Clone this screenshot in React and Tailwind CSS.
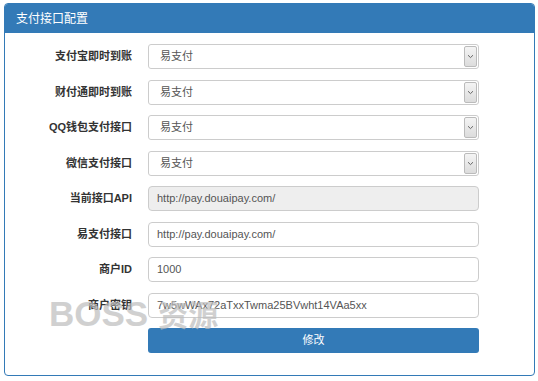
import React from "react";

const selects = ["支付宝即时到账", "财付通即时到账", "QQ钱包支付接口", "微信支付接口"];

const fields = [
  { label: "当前接口API", value: "http://pay.douaipay.com/", disabled: true },
  { label: "易支付接口", value: "http://pay.douaipay.com/" },
  { label: "商户ID", value: "1000" },
  { label: "商户密钥", value: "7w5wWAx72aTxxTwma25BVwht14VAa5xx" },
];

const Label = ({ children }) => (
  <div className="w-[127px] text-right text-[11px] font-bold text-[#333]">{children}</div>
);

export default function App() {
  return (
    <div
      className="w-[538px] h-[381px] bg-white pt-[3px] pl-[4px]"
      style={{ fontFamily: '"Liberation Sans", Arial, "Noto Sans CJK SC", sans-serif' }}
    >
      <div className="relative w-[531px] h-[373px] border border-[#337ab7] rounded-[4px] overflow-hidden">
        <div className="h-[29px] bg-[#337ab7] flex items-center pl-[11px] text-[12px] text-white">
          支付接口配置
        </div>
        <div className="flex flex-col gap-[10.5px] pt-[11px]">
          {selects.map((s) => (
            <div key={s} className="flex items-center">
              <Label>{s}</Label>
              <div className="ml-[16px] w-[331px] h-[25px] flex border border-[#ccc] rounded-[3px] bg-white">
                <div className="flex-1 flex items-center pl-[11px] text-[11px] text-[#555]">易支付</div>
                <div className="w-[13px] m-[1px] rounded-[2px] border border-[#bbb] bg-gradient-to-b from-[#f4f4f4] to-[#dcdcdc] flex items-center justify-center">
                  <svg width="7" height="5" viewBox="0 0 7 5">
                    <path d="M1 1.2 L3.5 3.6 L6 1.2" stroke="#666" strokeWidth="1" fill="none" />
                  </svg>
                </div>
              </div>
            </div>
          ))}
          {fields.map((f) => (
            <div key={f.label} className="flex items-center">
              <Label>{f.label}</Label>
              <div
                className={`ml-[16px] w-[331px] h-[25px] flex items-center pl-[8px] border border-[#ccc] rounded-[4px] text-[11px] text-[#555] ${
                  f.disabled ? "bg-[#eee]" : "bg-white"
                }`}
              >
                {f.value}
              </div>
            </div>
          ))}
          <div className="flex">
            <div className="w-[127px]" />
            <button className="ml-[16px] w-[331px] h-[25px] rounded-[3px] bg-[#337ab7] text-white text-[11px]">
              修改
            </button>
          </div>
        </div>
        <div className="absolute left-[44px] top-[292px] flex items-baseline gap-[10px] font-bold text-[#bdbdbd] opacity-70 pointer-events-none leading-none">
          <span className="text-[35px]">BOSS</span>
          <span className="text-[30px]">资源</span>
        </div>
      </div>
    </div>
  );
}
